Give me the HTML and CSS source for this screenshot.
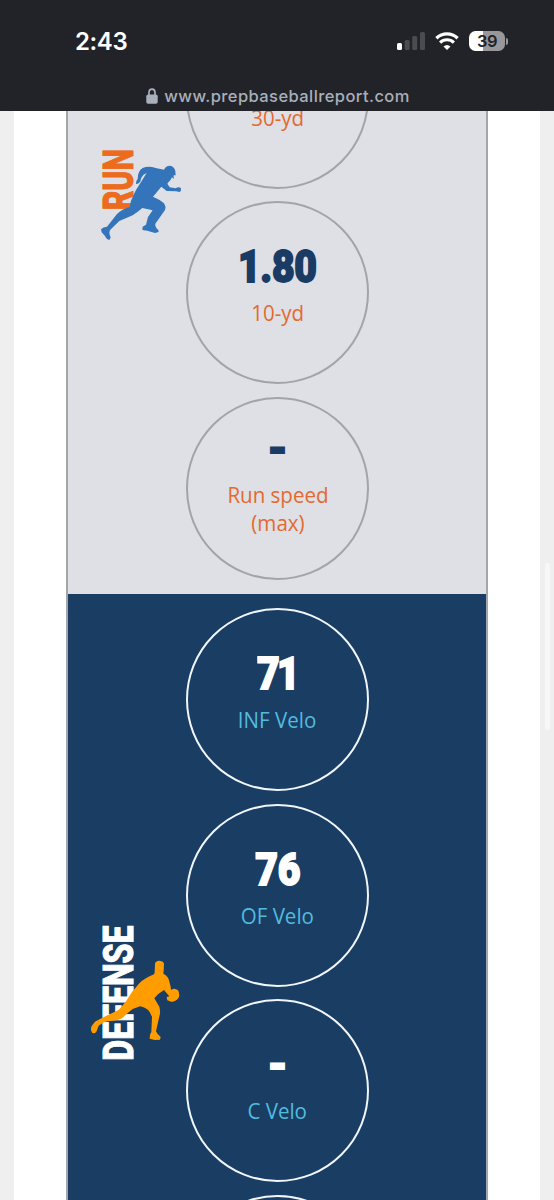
FILE: index.html
```html
<!DOCTYPE html>
<html lang="en">
<head>
    <meta charset="UTF-8">
    <title>Prep Baseball Report</title>
    <link rel="stylesheet" href="styles.css">
</head>
<body>
<header class="topbar">
    <div class="status">
        <span class="time">2:43</span>
        <div class="icons">
            <svg class="signal" width="28" height="18" viewBox="0 0 28 18">
                <rect x="0" y="11" width="5" height="7" rx="1.5" fill="#fff"/>
                <rect x="7.7" y="8" width="5" height="10" rx="1.5" fill="#4b4c50"/>
                <rect x="15.2" y="4" width="5" height="14" rx="1.5" fill="#4b4c50"/>
                <rect x="23" y="0" width="5" height="18" rx="1.5" fill="#4b4c50"/>
            </svg>
            <svg class="wifi" width="24" height="18" viewBox="0 0 24 18">
                <path d="M1.4 6.2 A15.4 15.4 0 0 1 22.6 6.2" fill="none" stroke="#fff" stroke-width="3.3"/>
                <path d="M5.1 10.6 A9.8 9.8 0 0 1 18.9 10.6" fill="none" stroke="#fff" stroke-width="3.1"/>
                <path d="M12 18 L8.5 14.6 Q12 11.6 15.5 14.6 Z" fill="#fff"/>
            </svg>
            <div class="battery"><span>39</span></div>
            <i class="battery-tip"></i>
        </div>
    </div>
    <div class="address">
        <svg width="12" height="16" viewBox="0 0 12 16">
            <path d="M3 8 V4.5 a3 3.4 0 0 1 6 0 V8" fill="none" stroke="#a9b0ba" stroke-width="1.7"/>
            <rect x="0.3" y="6.5" width="11.4" height="9.2" rx="1.8" fill="#a9b0ba"/>
        </svg>
        <span>www.prepbaseballreport.com</span>
    </div>
</header>
<main class="page">
    <div class="panel">
        <section class="group run">
            <svg class="label" width="100" height="115" viewBox="0 0 300 345">
                <text class="label-text" transform="translate(145 226) rotate(-90)" textLength="184" lengthAdjust="spacingAndGlyphs">RUN</text>
                <path fill="#3374ba" d="M237 104 Q242 92 255 92 Q268 94 271 108 L272 121 L266 121 L266 132 L261 127 L256 136 Q250 142 247 146 L254 157 L272 160 Q281 153 288 160 Q289 168 284 171 L273 169 L245 168 L229 155 Q219 167 204 185 Q224 193 237 205 Q244 215 240 225 L211 266 Q209 275 220 285 L221 291 L210 294 L187 287 L172 285 L173 275 L183 269 L189 246 L203 226 L172 219 Q157 232 143 241 L103 258 L76 284 Q70 292 77 307 L74 314 Q65 315 60 303 L50 292 L48 283 Q54 275 66 275 L96 237 Q111 222 134 216 Q137 195 146 179 L153 165 L185 114 Q174 118 169 128 L166 139 Q162 149 153 147 Q151 139 158 132 Q158 108 173 99 Q190 91 212 99 Z"/>
            </svg>
            <div class="circles">
                <div class="circle first">
                    <span>30-yd</span>
                </div>
                <div class="circle">
                    <b>1.80</b>
                    <span>10-yd</span>
                </div>
                <div class="circle two-lines">
                    <b class="dash">-</b>
                    <span>Run speed<br>(max)</span>
                </div>
            </div>
        </section>
        <section class="group defense">
            <svg class="label" width="100" height="160" viewBox="0 0 300 480">
                <text class="label-text" transform="translate(160 452) rotate(-90)" textLength="406" lengthAdjust="spacingAndGlyphs">DEFENSE</text>
                <path fill="#ff9d00" d="M225 161 Q226 153 238 152 Q249 153 252 160 L251 183 L250 191 Q264 199 266 208 L272 230 L273 240 Q283 232 294 241 Q301 253 295 265 Q286 276 273 275 L262 271 L260 261 L268 259 L252 240 Q233 251 223 265 L238 290 Q242 305 239 315 L228 364 Q232 374 242 381 L240 389 L225 390 L209 386 L210 374 L214 366 L216 320 L209 306 Q199 292 180 289 L158 297 Q142 309 126 325 Q113 332 83 334 Q68 337 56 347 L49 365 Q44 371 37 369 Q30 359 35 348 L45 335 Q74 319 116 300 L137 275 Q156 243 178 220 Q194 204 222 193 L224 187 Z"/>
            </svg>
            <div class="circles">
                <div class="circle">
                    <b class="tight">71</b>
                    <span>INF Velo</span>
                </div>
                <div class="circle">
                    <b>76</b>
                    <span>OF Velo</span>
                </div>
                <div class="circle">
                    <b class="dash">-</b>
                    <span>C Velo</span>
                </div>
                <div class="circle"></div>
            </div>
        </section>
    </div>
    <i class="scrollbar"></i>
</main>
</body>
</html>
```
FILE: styles.css
```css
*{
    margin: 0;
    padding: 0;
    box-sizing: border-box;
}
body
{
    width: 554px;
    height: 1200px;
    overflow: hidden;
    background: #efefef;
    font-family: "Open Sans", "Noto Sans", sans-serif;
}
.topbar
{
    height: 111px;
    background: #222328;
    font-family: Inter, sans-serif;
}
.status
{
    display: flex;
    justify-content: space-between;
    align-items: center;
    height: 82px;
    padding: 0 46px 0 75px;
}
.time
{
    color: #fff;
    font-size: 24px;
    font-weight: 600;
    letter-spacing: -0.4px;
}
.icons
{
    display: flex;
    align-items: center;
}
.wifi
{
    margin: 0 10px;
}
.battery
{
    width: 36px;
    height: 20px;
    border-radius: 6.5px;
    background: linear-gradient(90deg, #fff 39%, #98989b 39%);
    color: #222328;
    font-size: 16.5px;
    font-weight: 600;
    line-height: 21px;
    text-align: center;
    letter-spacing: -0.5px;
}
.battery-tip
{
    width: 2px;
    height: 7px;
    margin-left: 1px;
    border-radius: 0 2px 2px 0;
    background: #98989b;
}
.address
{
    display: flex;
    justify-content: center;
    align-items: center;
    gap: 6px;
    height: 27px;
    padding-left: 2px;
    color: #a9b0ba;
    font-size: 16.5px;
    font-weight: 500;
    letter-spacing: 0.42px;
}
.page
{
    position: relative;
    height: 1089px;
    margin: 0 14px;
    padding: 0 52px;
    background: #fff;
}
.panel
{
    height: 1089px;
    overflow: hidden;
    border-left: 2px solid #a5a6ab;
    border-right: 2px solid #a5a6ab;
}
.group
{
    display: grid;
    grid-template-columns: 118px 183px 1fr;
    align-items: start;
}
.run
{
    height: 483px;
    background: #dee0e5;
    color: #1a3c64;
}
.defense
{
    height: 620px;
    padding-top: 14px;
    background: #1a3d64;
    color: #fff;
}
.label
{
    margin-left: 17px;
}
.run .label
{
    margin-top: 24px;
}
.defense .label
{
    margin-top: 302px;
    margin-left: 12px;
}
.label-text
{
    font-family: Roboto, sans-serif;
    font-size: 128px;
    font-weight: 800;
    stroke-width: 3px;
}
.run .label-text
{
    fill: #ec6b1d;
    stroke: #ec6b1d;
}
.defense .label-text
{
    fill: #fff;
    stroke: #fff;
}
.circles
{
    display: flex;
    flex-direction: column;
    gap: 12.7px;
}
.circle
{
    display: flex;
    flex-direction: column;
    align-items: center;
    flex-shrink: 0;
    width: 183px;
    height: 183px;
    padding-top: 37px;
    border: 2px solid #a3a4a9;
    border-radius: 50%;
    text-align: center;
}
.defense .circle
{
    border: 2px solid #f0f6fc;
}
.first
{
    margin-top: -105.5px;
    padding-top: 96px;
}
.two-lines
{
    padding-top: 23.5px;
}
.circle b
{
    height: 59px;
    font-family: Roboto, sans-serif;
    font-size: 45px;
    font-weight: 900;
    line-height: 54px;
    letter-spacing: -0.3px;
    -webkit-text-stroke: 1.8px;
    transform: scaleX(.87);
}
.circle .tight
{
    letter-spacing: -3px;
}
.circle .dash
{
    letter-spacing: 0;
    transform: scaleX(1);
}
.circle span
{
    color: #e46a2e;
    font-size: 21.5px;
    font-weight: 370;
    line-height: 28px;
    transform: scaleX(.955);
}
.defense .circle span
{
    color: #52bbdc;
}
.scrollbar
{
    position: absolute;
    top: 452px;
    right: -10px;
    width: 5px;
    height: 167px;
    border-radius: 3px;
    background: #f8f6f8;
}
```
